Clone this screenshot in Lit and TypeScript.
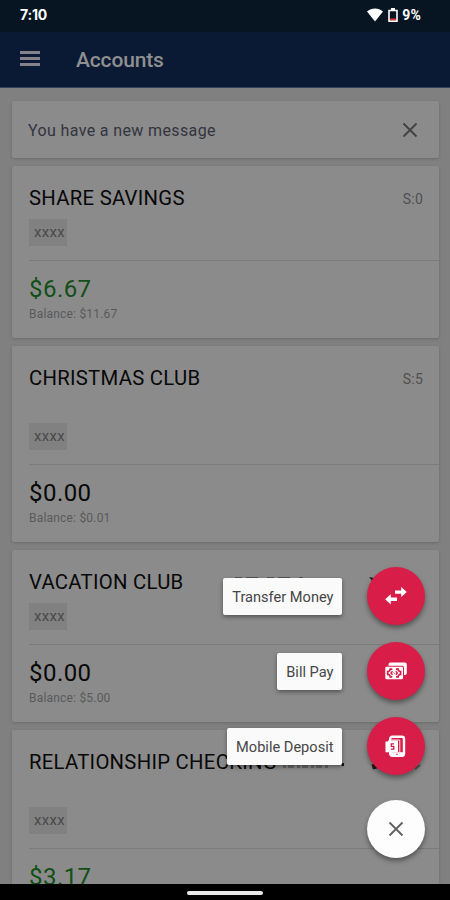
import { LitElement, html, css, svg, nothing } from "lit";
import { customElement } from "lit/decorators.js";
import { classMap } from "lit/directives/class-map.js";

interface Account {
  name: string;
  suffix: string;
  amount: string;
  balance: string;
  positive: boolean;
  tall: boolean;
}

const accounts: Account[] = [
  { name: "SHARE SAVINGS", suffix: "S:0", amount: "$6.67", balance: "Balance: $11.67", positive: true, tall: false },
  { name: "CHRISTMAS CLUB", suffix: "S:5", amount: "$0.00", balance: "Balance: $0.01", positive: false, tall: true },
  { name: "VACATION CLUB", suffix: "", amount: "$0.00", balance: "Balance: $5.00", positive: false, tall: false },
  { name: "RELATIONSHIP CHECKING", suffix: "", amount: "$3.17", balance: "", positive: true, tall: true },
];

const transferIcon = svg`<path fill="#fff" d="M11 5.400h6.200V2l5.600 5.100-5.600 5V8.800H11zM13 12.600H6.800V9.300L1.200 14.300l5.600 5.100V16H13z"/>`;
const billIcon = svg`
  <path fill="#fff" d="M6.400 2.500h14.500a1.900 1.900 0 0 1 1.900 1.900v8.600a1.900 1.900 0 0 1-1.900 1.900h-.9V7.800a2 2 0 0 0-2-2H4.500V4.400a1.900 1.900 0 0 1 1.900-1.900z"/>
  <rect x="1.300" y="6.800" width="17.700" height="12.400" rx="1.300" fill="#fff"/>
  <path fill="none" stroke="#d81d48" stroke-width="1.700" d="M8.300 9.200H6.200A2.200 2.200 0 0 1 3.700 11.500v3a2.200 2.200 0 0 1 2.500 2.300h2.100M12 9.200h2.100a2.200 2.200 0 0 0 2.500 2.300v3a2.200 2.200 0 0 0-2.500 2.300H12"/>
  <path fill="none" stroke="#d81d48" stroke-width="1.400" d="M8.500 11.200 7 13l1.500 1.800M11.800 11.200l1.500 1.800-1.500 1.800"/>
  <path stroke="#d81d48" stroke-width=".8" d="M9.500 12.300l1.300 1.400"/>`;
const depositIcon = svg`
  <rect x="6.200" y="1.700" width="13.800" height="19.200" rx="2.200" fill="#d81d48" stroke="#fff" stroke-width="2.400"/>
  <path fill="#fff" d="M6 17.200h14v3.800H6z"/>
  <circle cx="13" cy="19.300" r=".8" fill="#d81d48"/>
  <path fill="#fff" d="M1.500 6.500h12.500v10.700H1.500zM4 5.500h10v2H4z"/>
  <path fill="none" stroke="#fff" stroke-width=".9" d="M7.500 5h8.300v12"/>
  <path fill="none" stroke="#d81d48" stroke-width="1.300" d="M10 8.900H7.300v2.500h2.500v2.700H6.900"/>`;

const actions = [
  { label: "Transfer Money", icon: transferIcon },
  { label: "Bill Pay", icon: billIcon },
  { label: "Mobile Deposit", icon: depositIcon },
];

const cross = svg`<path d="M1.500 1.500l13 13M14.500 1.500l-13 13" fill="none" stroke="currentColor" stroke-width="1.800"/>`;

@customElement("app-root")
export class AppRoot extends LitElement {
  static styles = css`
    :host {
      display: flex; flex-direction: column; position: relative; width: 450px; height: 900px;
      overflow: hidden; background: #808080; font-family: Roboto, "Liberation Sans", sans-serif;
      color: #080808;
    }
    * { box-sizing: border-box; }
    svg { display: block; }
    .status {
      flex: none; height: 32px; padding: 0 29px 2px 20px; display: flex; align-items: center;
      background: #071523; color: #fff;
    }
    .time { flex: 1; font: 700 14px/20px Inter, sans-serif; letter-spacing: -.2px; }
    .wifi { margin-right: 5px; }
    .battery { margin-right: 4px; }
    .pct { font: 700 14px/20px Roboto, sans-serif; letter-spacing: .2px; }
    .bar {
      flex: none; height: 56px; padding: 0 20px; display: flex; align-items: center; gap: 36px;
      background: #0a1a35; border-bottom: 1px solid #33405a; color: #8f8f8f;
    }
    .menu { width: 20px; display: flex; flex-direction: column; gap: 3px; margin-top: -2px; }
    .line { height: 3px; background: #858389; }
    .heading { font-size: 21px; font-weight: 500; letter-spacing: -.15px; line-height: 28px; padding-top: 1px; }
    .page { flex: 1; min-height: 0; overflow: hidden; padding: 13px 11px 0 12px; display: flex; flex-direction: column; gap: 8px; }
    .card { flex: none; background: #8b8b8b; border-radius: 2px; box-shadow: 0 1px 3px #6a6a6a; }
    .message { height: 57px; padding: 2px 21px 0 16px; display: flex; align-items: center; justify-content: space-between; font-size: 16px; letter-spacing: .37px; color: #32353f; }
    .message svg { color: #414141; margin-top: -2px; }
    .account { height: 172px; padding-left: 17px; display: flex; flex-direction: column; }
    .tall { height: 196px; }
    .top { height: 53px; padding: 19px 16px 0 0; display: flex; justify-content: space-between; align-items: flex-start; }
    .tall .top { height: 77px; }
    .name { font-size: 20.300px; line-height: 26px; letter-spacing: .28px; white-space: nowrap; }
    .suffix { font-size: 14px; line-height: 29px; color: #505050; letter-spacing: .2px; }
    .tag { width: 38px; height: 27px; background: #818181; font-size: 15px; line-height: 27px; padding-left: 5px; letter-spacing: .3px; color: #4a4a4a; }
    .rule { margin-top: 14px; height: 1px; background: #7b7b7b; flex: none; }
    .amount { margin-top: 12px; font-size: 24px; line-height: 32px; letter-spacing: .45px; }
    .green { color: #124f17; }
    .balance { font-size: 12px; line-height: 18px; letter-spacing: .2px; color: #5a5a5a; }
    .nav { flex: none; height: 16px; background: #000; display: flex; justify-content: center; padding-top: 7px; z-index: 1; }
    .pill { width: 76px; height: 4px; border-radius: 2px; background: #e8e8e8; }
    .traces { position: absolute; left: 225px; top: 570px; }
    .dial { position: absolute; right: 25px; bottom: 42px; display: flex; flex-direction: column; align-items: flex-end; gap: 17px; }
    .action { display: flex; align-items: center; gap: 25px; height: 58px; }
    .tip {
      height: 37px; line-height: 38px; padding: 0 8.500px 0 9px; border-radius: 2px; background: #fafafa;
      box-shadow: 0 2px 4px #0006; font-size: 14.600px; color: #464646; white-space: nowrap;
    }
    .fab {
      width: 58px; height: 58px; border-radius: 50%; background: #d81d48; color: #fff;
      display: flex; align-items: center; justify-content: center; box-shadow: 0 3px 5px #0006;
    }
    .close { margin-top: 8px; background: #fdfdfd; color: #606060; }
  `;

  private card(a: Account) {
    return html`<section class=${classMap({ card: true, account: true, tall: a.tall })}>
      <div class="top"><span class="name">${a.name}</span><span class="suffix">${a.suffix}</span></div>
      <div class="tag">xxxx</div>
      <div class="rule"></div>
      <div class=${classMap({ amount: true, green: a.positive })}>${a.amount}</div>
      ${a.balance ? html`<div class="balance">${a.balance}</div>` : nothing}
    </section>`;
  }

  render() {
    return html`
      <div class="status">
        <span class="time">7:10</span>
        <svg class="wifi" width="16" height="14" viewBox="0 0 16 14"><path fill="#fff" d="M0 3.600C4.500-.4 11.500-.4 16 3.600L8 13.500z"/></svg>
        <svg class="battery" width="10" height="14" viewBox="0 0 10 14"><path fill="none" stroke="#fff" stroke-width="1.600" d="M1 2.500h8v10.600H1z"/><path fill="#fff" d="M3 0h4v2H3z"/><path fill="#d33" d="M2 10.500h6v1.800H2z"/></svg>
        <span class="pct">9%</span>
      </div>
      <header class="bar">
        <div class="menu"><div class="line"></div><div class="line"></div><div class="line"></div></div>
        <span class="heading">Accounts</span>
      </header>
      <main class="page">
        <div class="card message"><span>You have a new message</span><svg width="16" height="16" viewBox="0 0 16 16">${cross}</svg></div>
        ${accounts.map((a) => this.card(a))}
      </main>
      <div class="nav"><div class="pill"></div></div>
      <svg class="traces" width="205" height="205" viewBox="0 0 205 205">
        <path stroke="#555" stroke-width="1" stroke-dasharray="7 4 12 9" d="M10 7.500h68"/>
        <path fill="#1b1b1b" d="M144 7l5 1 3 4-3 1zM146.500 194.500l4-1 1.500 5-4 1z"/>
        <path fill="#141414" d="M116.500 193h2.500v3h-2.500z"/>
        <path stroke="#686868" stroke-width="3" stroke-dasharray="3 2 6 3" d="M58 196.500h45"/>
        <path stroke="#555" stroke-width="2" d="M190 199l5-4"/>
      </svg>
      <div class="dial">
        ${actions.map((a) => html`<div class="action"><span class="tip">${a.label}</span><div class="fab"><svg width="24" height="22" viewBox="0 0 24 22">${a.icon}</svg></div></div>`)}
        <div class="fab close"><svg width="16" height="16" viewBox="0 0 16 16">${cross}</svg></div>
      </div>`;
  }
}
